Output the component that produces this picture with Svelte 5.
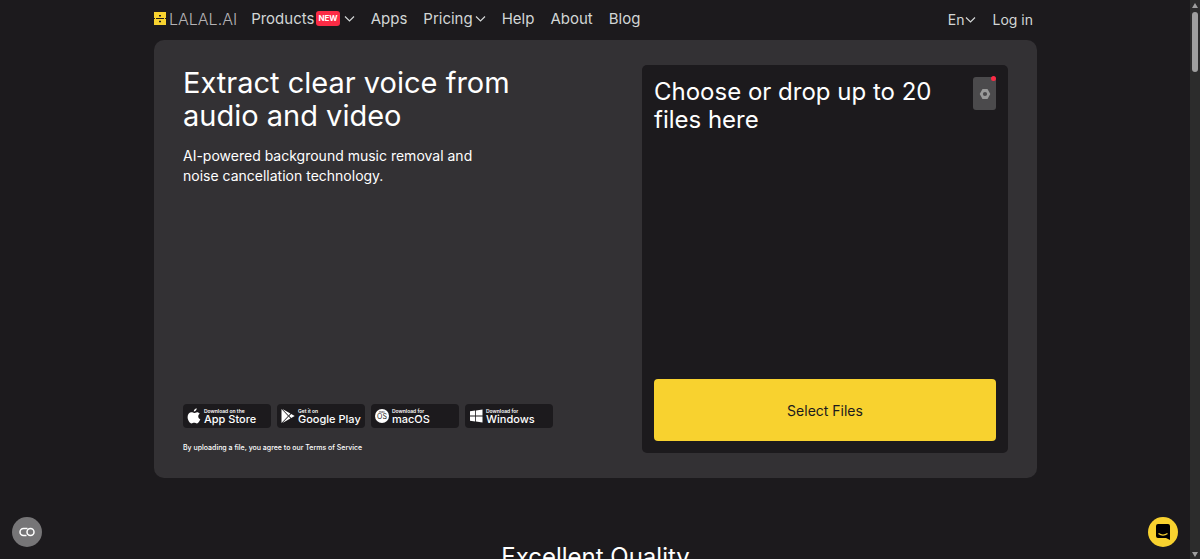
<script lang="ts">
	const links = [
		{ label: 'Products', badge: 'NEW', menu: true },
		{ label: 'Apps' },
		{ label: 'Pricing', menu: true },
		{ label: 'Help' },
		{ label: 'About' },
		{ label: 'Blog' }
	];

	const stores = [
		{ icon: 'apple', hint: 'Download on the', name: 'App Store' },
		{ icon: 'google', hint: 'Get it on', name: 'Google Play' },
		{ icon: 'macos', hint: 'Download for', name: 'macOS' },
		{ icon: 'windows', hint: 'Download for', name: 'Windows' }
	];

	let fileInput: HTMLInputElement;
</script>

{#snippet chevron()}
	<svg class="chevron" viewBox="0 0 11 8" aria-hidden="true">
		<path d="M1 1.500 5.500 6 10 1.500" fill="none" stroke="currentColor" stroke-width="1.200" />
	</svg>
{/snippet}

<div class="page">
	<header>
		<a class="logo" href="#top" aria-label="LALAL.AI">
			<svg viewBox="0 0 12 13" aria-hidden="true">
				<path fill="#f8d22f" d="M0 0h12v13H0z" />
				<path fill="#1c1a1d" d="M0 6h1v1H0zM2 6h8v1H2zM11 6h1v1h-1zM5 3h2v1.500H5zM5 8.700h2v1.500H5z" />
			</svg>
			<span>LALAL.AI</span>
		</a>
		<nav aria-label="Main">
			{#each links as link}
				<a href="#{link.label.toLowerCase()}">
					{link.label}
					{#if link.badge}<span class="new">{link.badge}</span>{/if}
					{#if link.menu}{@render chevron()}{/if}
				</a>
			{/each}
		</nav>
		<div class="account">
			<button class="lang" type="button">En{@render chevron()}</button>
			<a href="#login">Log in</a>
		</div>
	</header>

	<main>
		<section class="hero">
			<div class="intro">
				<h1>Extract clear voice from audio and video</h1>
				<p class="lead">AI-powered background music removal and noise cancellation technology.</p>

				<ul class="stores">
					{#each stores as store}
						<li>
							<a href="#{store.icon}">
								<svg viewBox="0 0 14 16" aria-hidden="true">
									{#if store.icon === 'apple'}
										<path
											d="M9.700 0.300c.1 1.700-1.300 3.300-2.900 3.300-.2-1.600 1.200-3.100 2.900-3.300zM10 4.200c1.100 0 2.200.6 2.800 1.500-2.300 1.400-1.900 4.500.5 5.500-.5 1.500-1.900 4.100-3.400 4.200-1 0-1.500-.6-2.700-.6s-1.800.6-2.700.6C2.600 15.400.6 12 .6 9c0-3 1.900-4.700 3.900-4.700 1.100 0 2 .7 2.700.7.700 0 1.700-.8 2.800-.8z"
										/>
									{:else if store.icon === 'google'}
										<path
											d="M.5 1v14L7 8zM1.400 1l6.200 6.400L9.400 5.600zM1.400 15l6.200-6.400 1.800 1.800zM10.200 6 8.200 8l2 2L13.700 8z"
										/>
									{:else if store.icon === 'macos'}
										<circle cx="7" cy="8" r="7" />
										<text x="7" y="11" text-anchor="middle">OS</text>
										<text class="mac" x="7" y="5" text-anchor="middle">mac</text>
									{:else}
										<path
											d="M1 3.300 6.200 2.600v5H1zM7 2.500 13.500 1.600v6H7zM1 8.400h5.200v5L1 12.700zM7 8.400h6.500v6L7 13.500z"
										/>
									{/if}
								</svg>
								<span class="store-text">
									<small>{store.hint}</small>
									<strong>{store.name}</strong>
								</span>
							</a>
						</li>
					{/each}
				</ul>
				<p class="terms">
					By uploading a file, you agree to our <a href="#terms">Terms of Service</a>
				</p>
			</div>

			<div class="upload">
				<div class="upload-head">
					<h2>Choose or drop up to 20 files here</h2>
					<button class="settings" type="button" aria-label="Settings">
						<svg viewBox="0 0 12 12" aria-hidden="true">
							<path
								fill-rule="evenodd"
								d="M3.500 1h5L11.300 6 8.500 11h-5L.7 6zM6 3.900a2.100 2.100 0 1 0 0 4.200 2.100 2.100 0 0 0 0-4.200z"
							/>
						</svg>
						<span class="dot"></span>
					</button>
				</div>
				<input
					type="file"
					multiple
					hidden
					aria-label="Files"
					bind:this={fileInput}
				/>
				<button class="select" type="button" onclick={() => fileInput.click()}>Select Files</button>
			</div>
		</section>

		<section class="quality">
			<h2>Excellent Quality</h2>
		</section>
	</main>

	<button class="float cookies" type="button" aria-label="Cookie preferences">
		<svg viewBox="0 0 16 10" aria-hidden="true">
			<path
				d="M8.500 1.500H4.500a3.500 3.500 0 0 0 0 7H7.500"
				fill="none"
				stroke="#fff"
				stroke-width="1.500"
			/>
			<circle cx="11.500" cy="5" r="3.500" fill="none" stroke="#fff" stroke-width="1.500" />
		</svg>
	</button>
	<button class="float chat" type="button" aria-label="Open chat">
		<svg viewBox="0 0 14 16" aria-hidden="true">
			<path d="M2 0h10a2 2 0 0 1 2 2v14l-4-2H2a2 2 0 0 1-2-2V2a2 2 0 0 1 2-2z" />
			<path d="M2.500 9.500q4.500 3.200 9 0" fill="none" stroke="#f8d22f" stroke-width="1.200" />
		</svg>
	</button>

	<div class="scrollbar" aria-hidden="true">
		<svg viewBox="0 0 6 5"><path d="M3 0 6 5H0z" /></svg>
		<span></span>
		<svg class="down" viewBox="0 0 6 5"><path d="M3 5 0 0h6z" /></svg>
	</div>
</div>

<style>
	:global(body) {
		background: #1c1a1d;
	}

	.page {
		box-sizing: border-box;
		height: 100vh;
		padding-right: 9px;
		overflow: hidden;
		color: #fff;
		font-family: Inter, 'Liberation Sans', sans-serif;
	}

	h1,
	h2,
	p,
	ul {
		margin: 0;
		padding: 0;
		font-weight: 400;
	}

	a {
		color: inherit;
		text-decoration: none;
	}

	button {
		padding: 0;
		border: 0;
		background: none;
		color: inherit;
		font: inherit;
		cursor: pointer;
	}

	header,
	main {
		max-width: 883px;
		margin: 0 auto;
	}

	header {
		display: flex;
		align-items: center;
		height: 40px;
		padding-bottom: 3px;
		box-sizing: border-box;
		color: #d2d6d6;
		font-size: 15px;
	}

	.logo {
		display: flex;
		align-items: center;
		gap: 3px;
		margin-right: 14px;
		color: #b4b2b5;
		font-size: 16px;
		font-weight: 300;
	}

	.logo svg {
		width: 12px;
		height: 13px;
	}

	nav {
		display: flex;
		gap: 16px;
	}

	nav a {
		display: flex;
		align-items: center;
		gap: 2px;
	}

	.new {
		margin-right: 2px;
		padding: 0 2px;
		border-radius: 3px;
		background: #fb2b45;
		color: #fff;
		font-size: 8px;
		font-weight: 700;
		line-height: 15px;
	}

	.chevron {
		width: 11px;
		height: 8px;
	}

	.account {
		display: flex;
		gap: 17px;
		margin-left: auto;
		padding-top: 2px;
		padding-right: 4px;
		font-size: 14px;
	}

	.lang {
		display: flex;
		align-items: center;
	}

	.hero {
		display: flex;
		justify-content: space-between;
		gap: 24px;
		box-sizing: border-box;
		min-height: 438px;
		padding: 25px 29px;
		border-radius: 10px;
		background: #333134;
	}

	.intro {
		display: flex;
		flex: 1;
		flex-direction: column;
	}

	h1 {
		max-width: 350px;
		padding-top: 1px;
		font-size: 29px;
		line-height: 33px;
	}

	.lead {
		max-width: 320px;
		margin-top: 14px;
		font-size: 14px;
		line-height: 20px;
	}

	.stores {
		display: flex;
		gap: 6px;
		margin-top: auto;
		list-style: none;
	}

	.stores a {
		display: flex;
		align-items: center;
		gap: 3px;
		box-sizing: border-box;
		width: 88px;
		height: 24px;
		padding-left: 4px;
		border-radius: 4px;
		background: #1c1a1d;
	}

	.stores svg {
		flex: none;
		width: 14px;
		height: 16px;
		fill: #fff;
	}

	.stores text {
		fill: #1c1a1d;
		font-size: 7px;
	}

	.stores .mac {
		font-size: 3px;
	}

	.store-text {
		display: flex;
		flex-direction: column;
		white-space: nowrap;
	}

	small {
		font-size: 5px;
		font-weight: 600;
		line-height: 6px;
	}

	strong {
		font-size: 11px;
		font-weight: 500;
		line-height: 11px;
	}

	.terms {
		margin-top: 14px;
		font-size: 7px;
		font-weight: 500;
		line-height: 11px;
	}

	.upload {
		display: flex;
		flex: 0 0 366px;
		flex-direction: column;
		justify-content: space-between;
		box-sizing: border-box;
		padding: 12px;
		border-radius: 5px;
		background: #1c1a1d;
	}

	.upload-head {
		display: flex;
		align-items: flex-start;
		justify-content: space-between;
	}

	h2 {
		padding-top: 1px;
		font-size: 24px;
		line-height: 28px;
	}

	.settings {
		position: relative;
		display: grid;
		place-items: center;
		flex: none;
		width: 23px;
		height: 33px;
		border-radius: 3px;
		background: #4b4a4c;
	}

	.settings svg {
		width: 12px;
		height: 12px;
		fill: #999;
	}

	.dot {
		position: absolute;
		top: -1px;
		right: 0;
		width: 5px;
		height: 5px;
		border-radius: 50%;
		background: #fb2b45;
	}

	.select {
		height: 62px;
		border-radius: 4px;
		background: #f8d22f;
		color: #1c1a1d;
		font-size: 14px;
	}

	.quality {
		padding-top: 64px;
		text-align: center;
	}

	.float {
		position: fixed;
		bottom: 12px;
		display: grid;
		place-items: center;
		width: 30px;
		height: 30px;
		border-radius: 50%;
	}

	.cookies {
		left: 12px;
		background: #767577;
	}

	.cookies svg {
		width: 16px;
		height: 10px;
	}

	.chat {
		right: 22px;
		background: #f8d22f;
	}

	.chat svg {
		width: 14px;
		height: 16px;
	}

	.scrollbar {
		position: fixed;
		top: 0;
		right: 0;
		bottom: 0;
		display: flex;
		flex-direction: column;
		align-items: center;
		gap: 4px;
		box-sizing: border-box;
		width: 10px;
		padding: 3px 0 2px;
		background: #2c2c2c;
	}

	.scrollbar svg {
		width: 6px;
		height: 5px;
		fill: #9f9f9f;
	}

	.scrollbar span {
		width: 6px;
		height: 60px;
		border-radius: 3px;
		background: #9f9f9f;
	}

	.scrollbar .down {
		margin-top: auto;
	}
</style>
